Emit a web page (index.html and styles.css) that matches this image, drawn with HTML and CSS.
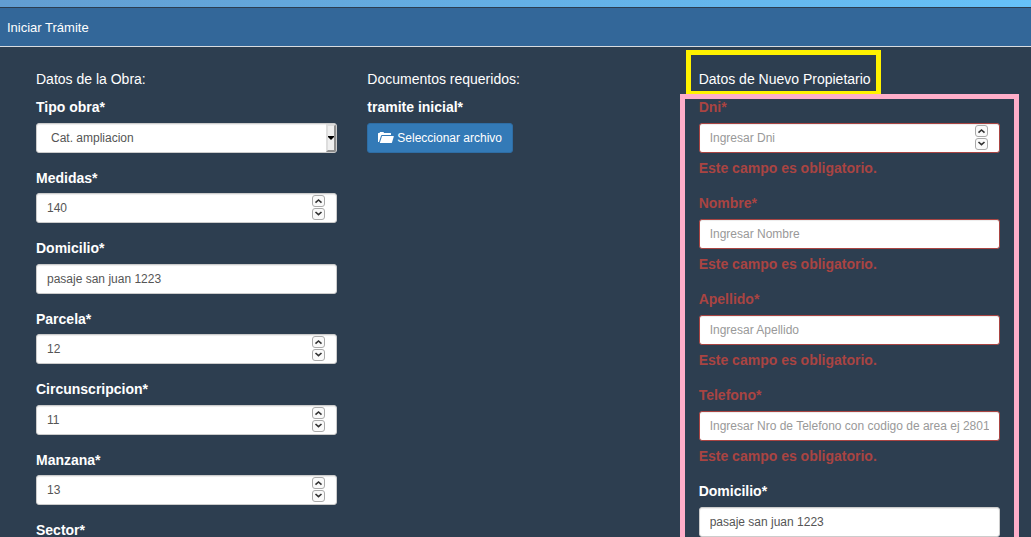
FILE: index.html
```html
<!DOCTYPE html>
<html lang="es">
<head>
<meta charset="utf-8">
<title>Iniciar Trámite</title>
<link rel="stylesheet" href="styles.css">
</head>
<body>
<svg class="symbols" aria-hidden="true">
  <symbol id="up" viewBox="0 0 11 10"><path d="M2.500 6.700 5.500 4 8.500 6.700" fill="none" stroke="#333" stroke-width="1.600"/></symbol>
  <symbol id="down" viewBox="0 0 11 10"><path d="M2.500 3 5.500 5.700 8.500 3" fill="none" stroke="#333" stroke-width="1.600"/></symbol>
</svg>
<div class="page">
  <div class="strip"></div>
  <header class="titlebar"><h1 class="title">Iniciar Trámite</h1></header>
  <form class="columns" novalidate>
    <section class="column">
      <h2 class="heading">Datos de la Obra:</h2>
      <div class="group">
        <label class="label" for="tipo">Tipo obra*</label>
        <div class="field">
          <select class="control select" id="tipo"><option>Cat. ampliacion</option></select>
          <span class="arrow"><svg width="6" height="4" viewBox="0 0 6 4"><path d="M0 0h6v1L3 4 0 1z"/></svg></span>
        </div>
      </div>
      <div class="group compact">
        <label class="label" for="medidas">Medidas*</label>
        <div class="field">
          <input class="control number" type="number" id="medidas" value="140">
          <span class="spinner"><button class="step" type="button" aria-label="Aumentar"><svg><use href="#up"/></svg></button><button class="step" type="button" aria-label="Disminuir"><svg><use href="#down"/></svg></button></span>
        </div>
      </div>
      <div class="group">
        <label class="label" for="domicilio">Domicilio*</label>
        <input class="control" type="text" id="domicilio" value="pasaje san juan 1223">
      </div>
      <div class="group compact">
        <label class="label" for="parcela">Parcela*</label>
        <div class="field">
          <input class="control number" type="number" id="parcela" value="12">
          <span class="spinner"><button class="step" type="button" aria-label="Aumentar"><svg><use href="#up"/></svg></button><button class="step" type="button" aria-label="Disminuir"><svg><use href="#down"/></svg></button></span>
        </div>
      </div>
      <div class="group">
        <label class="label" for="circ">Circunscripcion*</label>
        <div class="field">
          <input class="control number" type="number" id="circ" value="11">
          <span class="spinner"><button class="step" type="button" aria-label="Aumentar"><svg><use href="#up"/></svg></button><button class="step" type="button" aria-label="Disminuir"><svg><use href="#down"/></svg></button></span>
        </div>
      </div>
      <div class="group compact">
        <label class="label" for="manzana">Manzana*</label>
        <div class="field">
          <input class="control number" type="number" id="manzana" value="13">
          <span class="spinner"><button class="step" type="button" aria-label="Aumentar"><svg><use href="#up"/></svg></button><button class="step" type="button" aria-label="Disminuir"><svg><use href="#down"/></svg></button></span>
        </div>
      </div>
      <div class="group">
        <label class="label" for="sector">Sector*</label>
        <input class="control" type="text" id="sector">
      </div>
    </section>

    <section class="column">
      <h2 class="heading">Documentos requeridos:</h2>
      <div class="group">
        <span class="label" id="tramite">tramite inicial*</span>
        <button class="upload" type="button" aria-describedby="tramite">
          <svg width="16" height="12" viewBox="0 0 16 12" aria-hidden="true"><path d="M0 10V1.500Q0 1 .5 1H1.500L2 0H5.500L6 1H12.500Q13 1 13 1.500V3H4Q3.200 3 3 3.700L1 10Z" fill="#fff"/><path d="M4 4H15.500Q16 4 15.800 4.600L14 10.500Q13.800 11 13.200 11H1.800Z" fill="#fff"/></svg>
          Seleccionar archivo
        </button>
      </div>
    </section>

    <section class="column">
      <h2 class="heading"><span class="marked">Datos de Nuevo Propietario</span></h2>
      <div class="owner">
        <div class="group invalid">
          <label class="label" for="dni">Dni*</label>
          <div class="field">
            <input class="control number" type="number" id="dni" placeholder="Ingresar Dni">
            <span class="spinner"><button class="step" type="button" aria-label="Aumentar"><svg><use href="#up"/></svg></button><button class="step" type="button" aria-label="Disminuir"><svg><use href="#down"/></svg></button></span>
          </div>
          <p class="error">Este campo es obligatorio.</p>
        </div>
        <div class="group invalid">
          <label class="label" for="nombre">Nombre*</label>
          <input class="control" type="text" id="nombre" placeholder="Ingresar Nombre">
          <p class="error">Este campo es obligatorio.</p>
        </div>
        <div class="group invalid">
          <label class="label" for="apellido">Apellido*</label>
          <input class="control" type="text" id="apellido" placeholder="Ingresar Apellido">
          <p class="error">Este campo es obligatorio.</p>
        </div>
        <div class="group invalid">
          <label class="label" for="telefono">Telefono*</label>
          <input class="control" type="text" id="telefono" placeholder="Ingresar Nro de Telefono con codigo de area ej 2801">
          <p class="error">Este campo es obligatorio.</p>
        </div>
        <div class="group">
          <label class="label" for="domicilio2">Domicilio*</label>
          <input class="control" type="text" id="domicilio2" value="pasaje san juan 1223">
        </div>
      </div>
    </section>
  </form>
</div>
</body>
</html>
```
FILE: styles.css
```css
* { box-sizing: border-box; }
body {
  margin: 0;
  background: #2d3e50;
  color: #fff;
  font: 14px/20px "Liberation Sans", Arial, sans-serif;
}
.symbols { position: absolute; width: 0; height: 0; }
.page { height: 100vh; overflow: hidden; }
.strip {
  height: 8px;
  background: linear-gradient(90deg, #629dd1, #66c1f8);
  border-bottom: 1px solid #2b3d50;
}
.titlebar {
  padding: 10px 7px 8px;
  background: #336799;
  border-bottom: 1px solid #d9dce0;
}
.title { margin: 0; font-size: 13px; font-weight: 400; line-height: 20px; }
.columns {
  display: grid;
  grid-template-columns: repeat(3, minmax(0, 1fr));
  gap: 30px;
  padding: 22px 31px 0 36px;
}
.heading { margin: 0 0 8px; font-size: 14px; font-weight: 400; line-height: 20px; }
.group { margin-bottom: 15px; }
.label { display: block; margin-bottom: 6px; font-weight: 700; }
.compact .label { margin-bottom: 5px; }
.field { position: relative; }
.control {
  display: block;
  width: 100%;
  height: 30px;
  padding: 5px 10px;
  border: 1px solid #ccc;
  border-radius: 3px;
  background: #fff;
  box-shadow: inset 0 1px 1px rgba(0, 0, 0, .075);
  color: #555;
  font: 12px/18px "Liberation Sans", Arial, sans-serif;
}
.control::placeholder { color: #999; opacity: 1; }
.select { appearance: none; padding-left: 14px; }
.number { appearance: textfield; }
.number::-webkit-inner-spin-button { appearance: none; margin: 0; }
.arrow {
  position: absolute;
  top: 1px;
  right: 1px;
  bottom: 1px;
  width: 10px;
  display: flex;
  align-items: center;
  justify-content: center;
  background: #efefef;
  border: 2px solid;
  border-color: #ddd #8e8e8e #8e8e8e #ddd;
  border-radius: 0 2px 2px 0;
  pointer-events: none;
}
.arrow svg { flex: none; }
.spinner {
  position: absolute;
  top: 2px;
  right: 12px;
  display: grid;
  gap: 1px;
}
.step {
  width: 13px;
  height: 12px;
  padding: 0;
  border: 1px solid #aaa;
  border-radius: 3px;
  background: #fafafa;
}
.step svg { display: block; width: 100%; height: 100%; }
.upload {
  display: flex;
  align-items: center;
  gap: 3px;
  height: 30px;
  padding: 5px 10px;
  border: 1px solid #2e6da4;
  border-radius: 3px;
  background: #337ab7;
  color: #fff;
  font: 12px/18px "Liberation Sans", Arial, sans-serif;
}
.invalid { color: #a94442; }
.invalid .control { border-color: #a94442; }
.error { margin: 5px 0 0; font-weight: 700; }
.marked { position: relative; }
.marked::before {
  content: "";
  position: absolute;
  inset: -21px -10px -9px -13px;
  border: 5px solid #fff200;
}
.owner { position: relative; }
.owner::before {
  content: "";
  position: absolute;
  inset: -3px -19px -20px;
  border: 5px solid #ffaec9;
  pointer-events: none;
}
```
